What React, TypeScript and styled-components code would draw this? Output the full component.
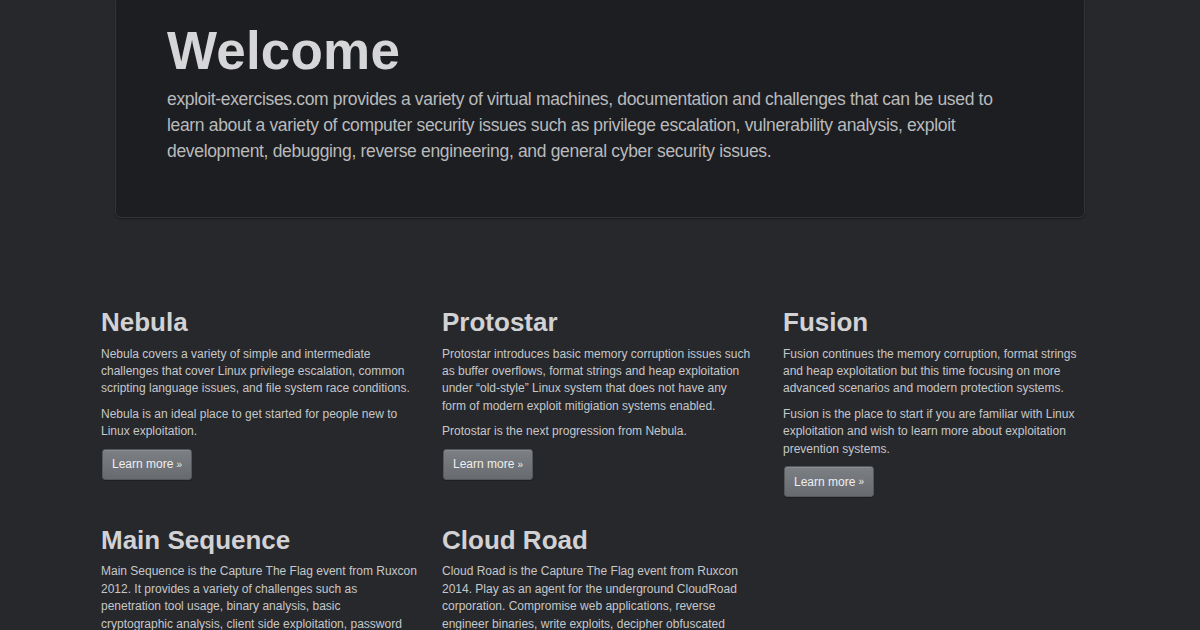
import React from "react";
import styled, { createGlobalStyle } from "styled-components";

const Global = createGlobalStyle`
  html, body { margin: 0; padding: 0; background: #26282c; }
  body { font-family: "Liberation Sans", Arial, Helvetica, sans-serif; color: #c9c9c9; }
  * { box-sizing: border-box; }
`;

const Page = styled.div`
  width: 1200px;
  height: 630px;
  overflow: hidden;
  background: #26282c;
`;

const Jumbotron = styled.section`
  width: 970px;
  margin: 0 auto;
  padding: 22px 51px 53px;
  background: #1d1e21;
  border: 1px solid #323438;
  border-top: none;
  border-radius: 0 0 6px 6px;
  box-shadow: 0 1px 2px rgba(0, 0, 0, 0.35);
`;

const Title = styled.h1`
  margin: 0;
  font-size: 53px;
  line-height: 1.1;
  font-weight: 700;
  color: #d6d6d8;
  letter-spacing: 0.2px;
`;

const Lead = styled.p`
  margin: 6px 0 0;
  width: 850px;
  font-size: 17.5px;
  line-height: 26px;
  font-weight: 400;
  letter-spacing: -0.33px;
  color: #b9babc;
`;

const Grid = styled.div`
  width: 999.5px;
  margin: 90px 0 0 101px;
  display: grid;
  grid-template-columns: repeat(3, 316.5px);
  column-gap: 24.5px;
  row-gap: 29px;
`;

const Card = styled.div`
  display: flex;
  flex-direction: column;
  align-items: flex-start;
`;

const CardTitle = styled.h2`
  margin: 0 0 8.7px;
  font-size: 26px;
  line-height: 1.1;
  font-weight: 700;
  color: #d2d2d4;
`;

const Text = styled.p`
  margin: 0 0 8px;
  font-size: 12px;
  line-height: 17.4px;
  color: #c6c7c9;
`;

const Button = styled.a`
  display: inline-flex;
  align-items: center;
  height: 31px;
  padding: 0 9px;
  margin-left: 1px;
  font-size: 12px;
  color: #eeeeee;
  text-decoration: none;
  background: linear-gradient(#7c8085, #676b70);
  border: 1px solid #55585c;
  border-radius: 3px;
  box-shadow: inset 0 1px 0 rgba(255, 255, 255, 0.1), 0 1px 1px rgba(0, 0, 0, 0.25);
`;

const Raquo = styled.span`
  font-size: 10px;
  margin-left: 3px;
`;

type Item = { title: string; paras: React.ReactNode[] };

const items: Item[] = [
  {
    title: "Nebula",
    paras: [
      "Nebula covers a variety of simple and intermediate challenges that cover Linux privilege escalation, common scripting language issues, and file system race conditions.",
      "Nebula is an ideal place to get started for people new to Linux exploitation.",
    ],
  },
  {
    title: "Protostar",
    paras: [
      <>
        Protostar introduces basic memory corruption issues such as buffer overflows, format strings and heap
        exploitation under {"\u201cold-style\u201d"} Linux system that does not have any
        <br />
        form of modern exploit mitigiation systems enabled.
      </>,
      "Protostar is the next progression from Nebula.",
    ],
  },
  {
    title: "Fusion",
    paras: [
      "Fusion continues the memory corruption, format strings and heap exploitation but this time focusing on more advanced scenarios and modern protection systems.",
      "Fusion is the place to start if you are familiar with Linux exploitation and wish to learn more about exploitation prevention systems.",
    ],
  },
  {
    title: "Main Sequence",
    paras: [
      <>
        Main Sequence is the Capture The Flag event from Ruxcon 2012. It provides a variety of challenges such as
        penetration tool usage, binary analysis, basic
        <br />
        cryptographic analysis, client side exploitation, password cracking and more.
      </>,
    ],
  },
  {
    title: "Cloud Road",
    paras: [
      <>
        Cloud Road is the Capture The Flag event from Ruxcon 2014. Play as an agent for the underground CloudRoad
        corporation. Compromise web applications, reverse engineer binaries, write exploits, decipher obfuscated
        <br />
        code and more.
      </>,
    ],
  },
];

export default function App() {
  return (
    <Page>
      <Global />
      <Jumbotron>
        <Title>Welcome</Title>
        <Lead>
          exploit-exercises.com provides a variety of virtual machines, documentation and challenges that can be used to
          learn about a variety of computer security issues such as privilege escalation, vulnerability analysis, exploit
          development, debugging, reverse engineering, and general cyber security issues.
        </Lead>
      </Jumbotron>
      <Grid>
        {items.map((it) => (
          <Card key={it.title}>
            <CardTitle>{it.title}</CardTitle>
            {it.paras.map((p, i) => (
              <Text key={i}>{p}</Text>
            ))}
            <Button href="#">
              Learn more<Raquo>»</Raquo>
            </Button>
          </Card>
        ))}
      </Grid>
    </Page>
  );
}
